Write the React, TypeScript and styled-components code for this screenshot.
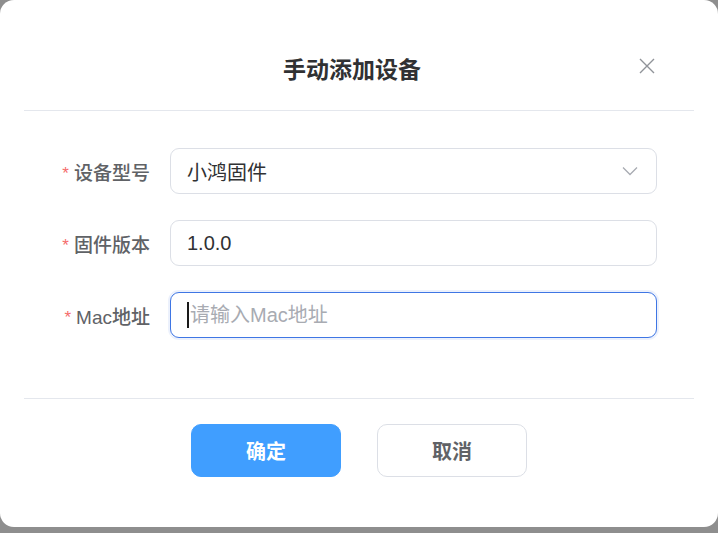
import React, { useState } from "react";
import styled, { createGlobalStyle } from "styled-components";

const GlobalStyle = createGlobalStyle`
  html, body {
    margin: 0;
    padding: 0;
    background: #8e8e8e;
  }
  * {
    box-sizing: border-box;
  }
`;

const fontStack = `"Liberation Sans", "Noto Sans CJK SC", sans-serif`;

const Backdrop = styled.div`
  width: 718px;
  height: 533px;
  background: #8e8e8e;
  font-family: ${fontStack};
`;

const Dialog = styled.div`
  width: 718px;
  height: 527px;
  background: #fff;
  border-radius: 14px;
  display: flex;
  flex-direction: column;
`;

const Header = styled.div`
  height: 111px;
  display: grid;
  grid-template-columns: 1fr auto 1fr;
  align-items: center;
  margin: 0 24px;
  padding: 26px 14px 0 0;
  border-bottom: 1px solid #e4e7ed;
`;

const Title = styled.h2`
  grid-column: 2;
  margin: 0;
  font-size: 23px;
  font-weight: 700;
  color: #303133;
`;

const CloseButton = styled.button`
  grid-column: 3;
  justify-self: end;
  margin-right: 21px;
  margin-top: -4px;
  width: 24px;
  height: 24px;
  padding: 0;
  border: none;
  background: none;
  display: flex;
  align-items: center;
  justify-content: center;
  color: #909399;
  cursor: pointer;
`;

const Form = styled.div`
  display: flex;
  flex-direction: column;
  gap: 26px;
  padding: 37px 0 60px;
  margin: 0 24px;
  border-bottom: 1px solid #e4e7ed;
`;

const Row = styled.div`
  display: grid;
  grid-template-columns: 126px 487px;
  column-gap: 20px;
  align-items: center;
`;

const Label = styled.label`
  justify-self: end;
  font-size: 19px;
  font-weight: 500;
  color: #606266;
  white-space: nowrap;

  &::before {
    content: "*";
    color: #f56c6c;
    font-weight: 400;
    font-size: 17px;
    margin-right: 5px;
    position: relative;
    top: -1px;
  }
`;

const InputBox = styled.div<{ $focused?: boolean }>`
  height: 46px;
  display: flex;
  align-items: center;
  padding: 0 18px 0 16px;
  border: ${(p) => (p.$focused ? "1.5px solid #3f76e4" : "1px solid #dcdfe6")};
  border-radius: 9px;
  background: #fff;
  box-shadow: ${(p) => (p.$focused ? "0 0 0 2px rgba(64, 120, 230, 0.1)" : "none")};
`;

const Caret = styled.span`
  width: 2px;
  height: 26px;
  background: #1a1a1a;
  margin-right: 1px;
  flex: none;
`;

const TextInput = styled.input`
  flex: 1;
  min-width: 0;
  border: none;
  outline: none;
  padding: 0;
  background: transparent;
  font-family: ${fontStack};
  font-size: 20px;
  color: #303133;

  &::placeholder {
    color: #a8abb2;
  }
`;

const SelectValue = styled.span`
  flex: 1;
  font-size: 20px;
  color: #303133;
`;

const Footer = styled.div`
  display: flex;
  justify-content: center;
  gap: 36px;
  padding-top: 25px;
`;

const Button = styled.button<{ $primary?: boolean }>`
  width: 150px;
  height: 53px;
  border-radius: 10px;
  border: 1px solid ${(p) => (p.$primary ? "#409eff" : "#dcdfe6")};
  background: ${(p) => (p.$primary ? "#409eff" : "#fff")};
  color: ${(p) => (p.$primary ? "#fff" : "#606266")};
  font-family: ${fontStack};
  font-size: 20px;
  font-weight: 700;
  cursor: pointer;
`;

const CloseIcon = () => (
  <svg width="16" height="16" viewBox="0 0 16 16" fill="none">
    <path d="M1 1 L15 15 M15 1 L1 15" stroke="currentColor" strokeWidth="1.4" />
  </svg>
);

const ChevronDown = () => (
  <svg width="16" height="10" viewBox="0 0 16 10" fill="none">
    <path d="M1 1.5 L8 8.5 L15 1.5" stroke="#a8abb2" strokeWidth="1.3" />
  </svg>
);

const App: React.FC = () => {
  const [version, setVersion] = useState("1.0.0");
  const [mac, setMac] = useState("");

  return (
    <>
      <GlobalStyle />
      <Backdrop>
        <Dialog>
          <Header>
            <Title>手动添加设备</Title>
            <CloseButton aria-label="关闭">
              <CloseIcon />
            </CloseButton>
          </Header>

          <Form>
            <Row>
              <Label>设备型号</Label>
              <InputBox>
                <SelectValue>小鸿固件</SelectValue>
                <ChevronDown />
              </InputBox>
            </Row>
            <Row>
              <Label>固件版本</Label>
              <InputBox>
                <TextInput value={version} onChange={(e) => setVersion(e.target.value)} />
              </InputBox>
            </Row>
            <Row>
              <Label>Mac地址</Label>
              <InputBox $focused>
                <Caret />
                <TextInput
                  placeholder="请输入Mac地址"
                  value={mac}
                  onChange={(e) => setMac(e.target.value)}
                />
              </InputBox>
            </Row>
          </Form>

          <Footer>
            <Button $primary>确定</Button>
            <Button>取消</Button>
          </Footer>
        </Dialog>
      </Backdrop>
    </>
  );
};

export default App;
